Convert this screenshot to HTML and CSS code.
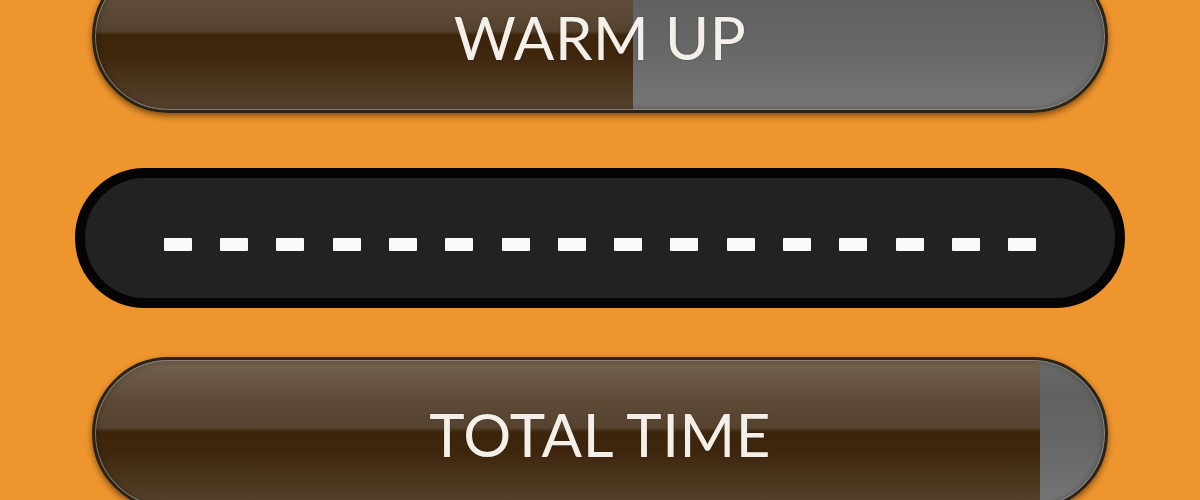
FILE: index.html
```html
<!DOCTYPE html>
<html lang="en">
<head>
<meta charset="utf-8">
<title>Timer</title>
<link rel="stylesheet" href="styles.css">
</head>
<body>
<main class="screen">
  <div class="bar bar-top">
    <div class="fill" style="width: 53.3%"></div>
    <div class="label">WARM UP</div>
  </div>
  <div class="display">
    <span class="dash"></span><span class="dash"></span><span class="dash"></span><span class="dash"></span>
    <span class="dash"></span><span class="dash"></span><span class="dash"></span><span class="dash"></span>
    <span class="dash"></span><span class="dash"></span><span class="dash"></span><span class="dash"></span>
    <span class="dash"></span><span class="dash"></span><span class="dash"></span><span class="dash"></span>
  </div>
  <div class="bar bar-bottom">
    <div class="fill" style="width: 93.6%"></div>
    <div class="label">TOTAL TIME</div>
  </div>
</main>
</body>
</html>
```
FILE: styles.css
```css
html, body {
  margin: 0;
  padding: 0;
  height: 100%;
  overflow: hidden;
}
body {
  background: #ee952e;
  font-family: Lato, "Open Sans", "Liberation Sans", sans-serif;
}
.screen {
  display: flex;
  flex-direction: column;
  align-items: center;
}
.bar {
  box-sizing: border-box;
  width: 1016px;
  height: 153px;
  border-radius: 77px;
  border: 3px solid #2b2318;
  overflow: hidden;
  display: grid;
  background: linear-gradient(to bottom, #6a6a6a 0%, #616161 25%, #666 55%, #767676 100%);
  box-shadow: 0 3px 6px rgba(70, 35, 0, 0.65);
}
.bar-top {
  margin-top: -40px;
}
.bar-bottom {
  margin-top: 49px;
}
.fill, .label, .bar::after {
  grid-area: 1 / 1;
}
.fill {
  justify-self: start;
  height: 100%;
  background: linear-gradient(to bottom, #72624f 0%, #5f4c38 25%, #56432f 46%, #3d250b 49%, #3e260d 62%, #4d3820 85%, #574430 100%);
}
.bar::after {
  content: "";
  border-radius: 74px;
  box-shadow: inset 0 0 0 1px rgba(150, 150, 138, 0.75), inset 0 0 5px 2px rgba(0, 0, 0, 0.22);
  pointer-events: none;
}
.label {
  align-self: center;
  justify-self: center;
  color: #f4f0e9;
  font-size: 60px;
  line-height: 1;
  letter-spacing: 0.5px;
  padding-top: 1px;
  text-shadow: 0 0 2px rgba(0, 0, 0, 0.3);
}
.display {
  box-sizing: border-box;
  margin-top: 55px;
  width: 1050px;
  height: 140px;
  border-radius: 70px;
  border: 10px solid #050505;
  background: #222;
  display: flex;
  justify-content: center;
  align-items: center;
  gap: 28.3px;
  padding-top: 13px;
}
.dash {
  width: 28px;
  height: 13px;
  background: #fafafa;
  border-radius: 1px;
}
```
